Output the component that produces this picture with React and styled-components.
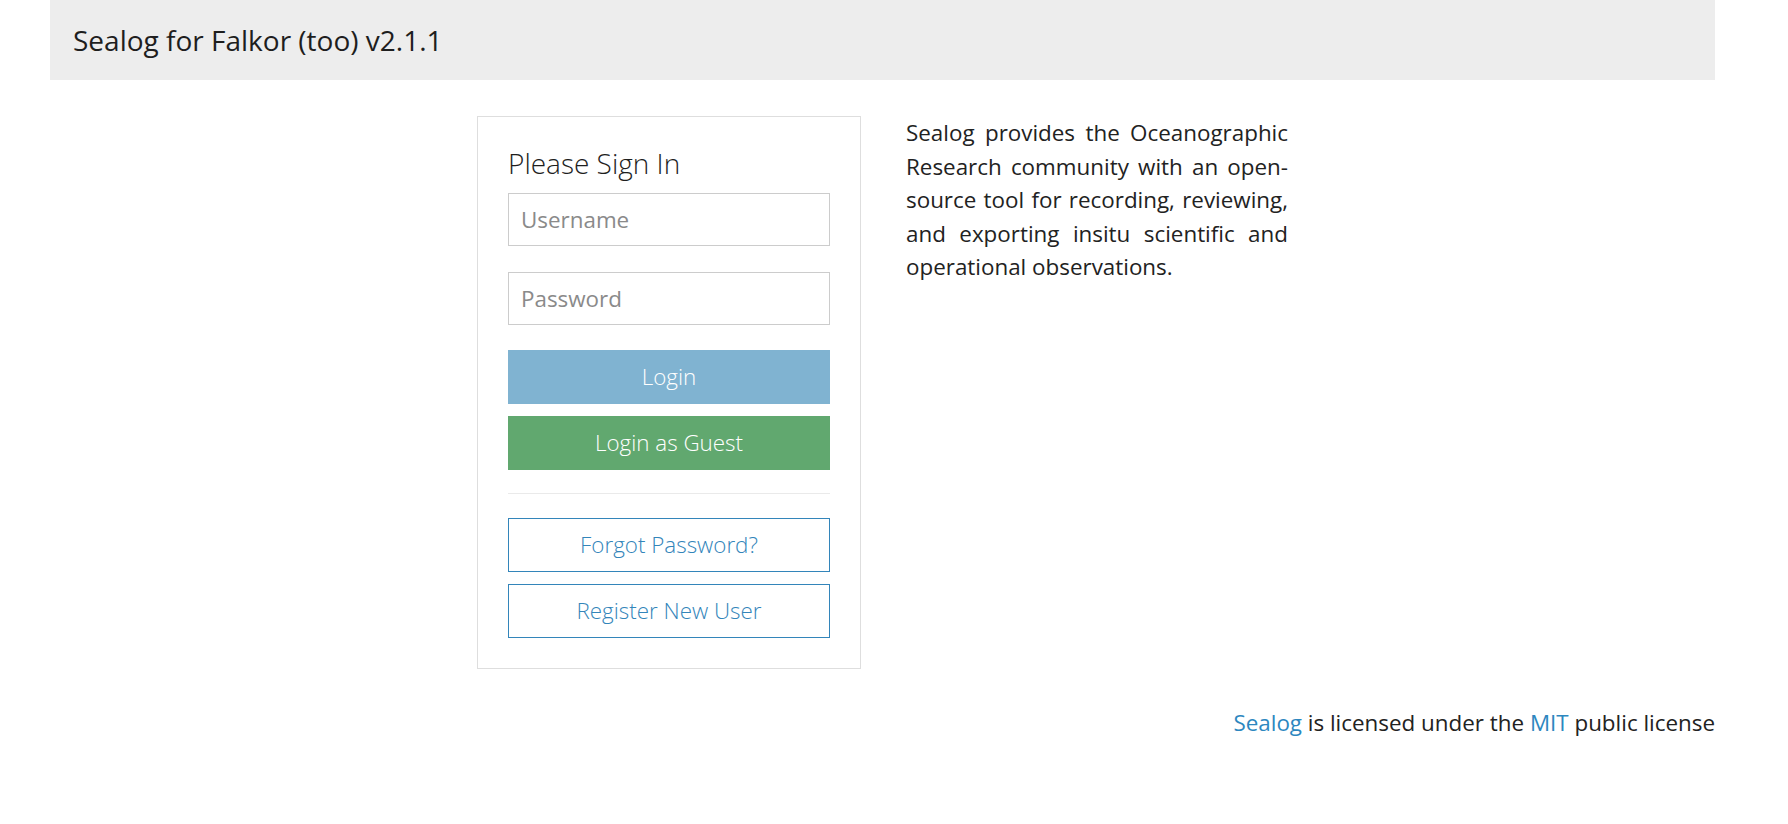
import styled, { createGlobalStyle } from "styled-components";

const GlobalStyle = createGlobalStyle`
  html, body {
    margin: 0;
    padding: 0;
    background: #fff;
    font-family: "Open Sans", "Liberation Sans", sans-serif;
    color: #222;
  }
  * {
    box-sizing: border-box;
  }
`;

function App() {
  return (
    <>
      <GlobalStyle />
      <Page>
        <Header>
          <Brand>Sealog for Falkor (too) v2.1.1</Brand>
        </Header>
        <Main>
          <Card>
            <Heading>Please Sign In</Heading>
            <Input type="text" placeholder="Username" />
            <Input type="password" placeholder="Password" />
            <Button $variant="primary" disabled>
              Login
            </Button>
            <Button $variant="success">Login as Guest</Button>
            <Divider />
            <Button $variant="outline">Forgot Password?</Button>
            <Button $variant="outline">Register New User</Button>
          </Card>
          <About>
            Sealog provides the Oceanographic Research community with an
            open-source tool for recording, reviewing, and exporting insitu
            scientific and operational observations.
          </About>
        </Main>
        <Footer>
          <Link href="#">Sealog</Link> is licensed under the{" "}
          <Link href="#">MIT</Link> public license
        </Footer>
      </Page>
    </>
  );
}

const Page = styled.div`
  width: 1665px;
  margin-left: 50px;
`;

const Header = styled.header`
  height: 80px;
  background: #ededed;
  display: flex;
  align-items: center;
  padding: 0 23px;
`;

const Brand = styled.div`
  font-size: 28px;
  color: #1e1e1e;
  line-height: 1;
`;

const Main = styled.div`
  display: flex;
  justify-content: center;
  align-items: flex-start;
  gap: 45px;
  margin-top: 36px;
`;

const Card = styled.div`
  width: 384px;
  border: 1px solid #dedede;
  padding: 30px 30px 30px;
  display: flex;
  flex-direction: column;
`;

const Heading = styled.h2`
  margin: 0 0 12px;
  font-size: 28px;
  font-weight: 300;
  line-height: 1.2;
  color: #1e1e1e;
`;

const Input = styled.input`
  height: 53px;
  width: 100%;
  border: 1px solid #ccc;
  border-radius: 0;
  padding: 0 12px;
  font-family: inherit;
  font-size: 22.4px;
  color: #444;
  margin-bottom: 26px;
  outline: none;

  &::placeholder {
    color: #8a8a8a;
  }

  &:nth-of-type(2) {
    margin-bottom: 25px;
  }
`;

const variants = {
  primary: `
    background: #80b3d1;
    border: 1px solid #80b3d1;
    color: #fff;
  `,
  success: `
    background: #61a86f;
    border: 1px solid #61a86f;
    color: #fff;
  `,
  outline: `
    background: #fff;
    border: 1.5px solid #3385ba;
    color: #3385ba;
  `,
};

const Button = styled.button`
  height: 54px;
  width: 100%;
  margin-bottom: 12px;
  border-radius: 0;
  font-family: inherit;
  font-size: 22.4px;
  font-weight: 300;
  cursor: pointer;
  ${(p) => variants[p.$variant]}

  &:disabled {
    cursor: default;
  }

  &:last-child {
    margin-bottom: 0;
  }
`;

const Divider = styled.hr`
  width: 100%;
  margin: 11px 0 24px;
  border: 0;
  border-top: 1px solid #eaeaea;
`;

const About = styled.p`
  width: 382px;
  margin: 0;
  font-size: 22.4px;
  line-height: 33.6px;
  text-align: justify;
  color: #222;
`;

const Footer = styled.div`
  margin-top: 37px;
  text-align: right;
  font-size: 22.4px;
  line-height: 33.6px;
  color: #222;
`;

const Link = styled.a`
  color: #2d87bf;
  text-decoration: none;
`;

export default App;
